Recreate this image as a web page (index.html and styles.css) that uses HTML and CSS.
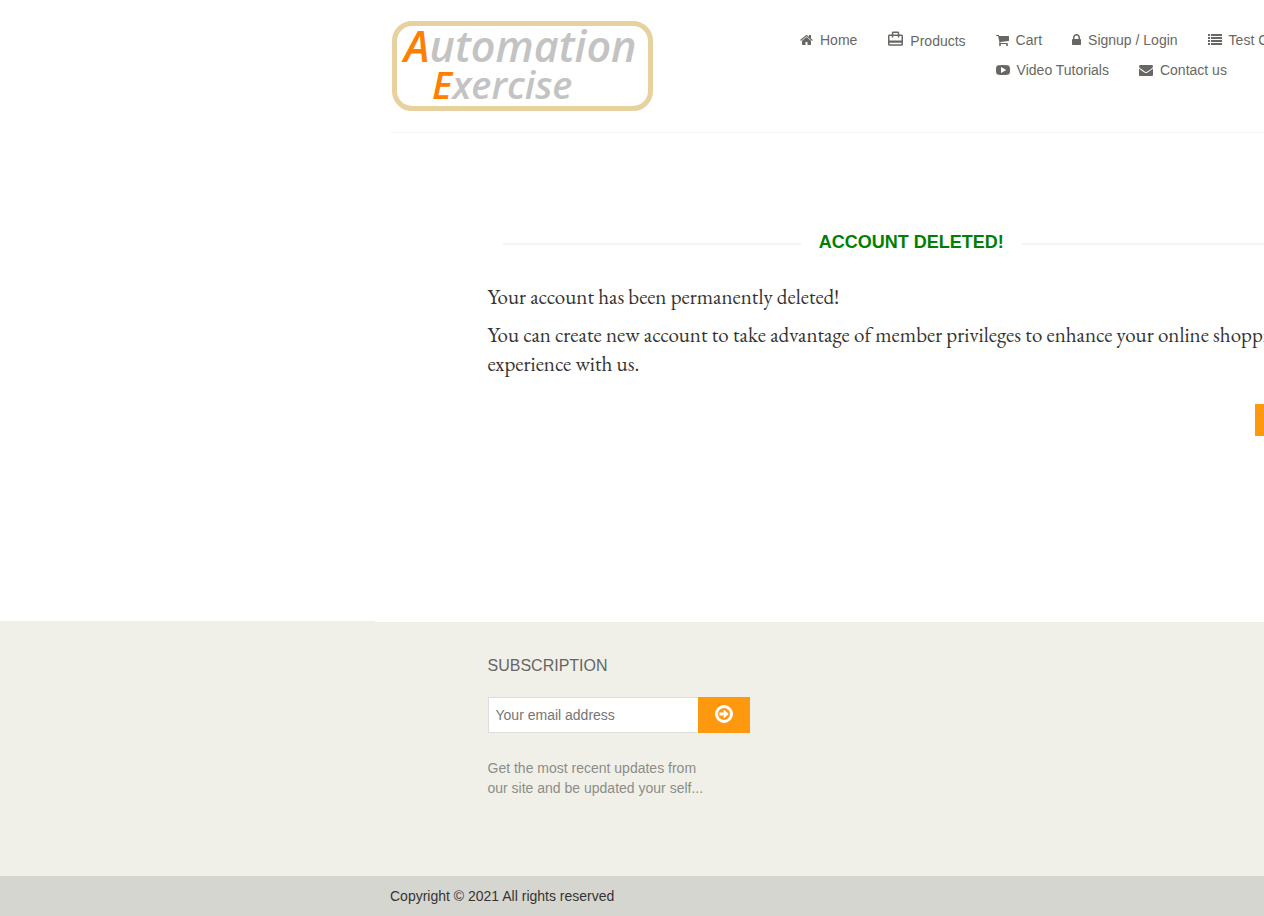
FILE: index.html
```html
<!DOCTYPE html>
<html lang="en">
<head>
<meta charset="utf-8">
<title>Automation Exercise - Account Deleted</title>
<link rel="stylesheet" href="styles.css">
</head>
<body>
<div class="page">
  <header class="container">
    <div class="header-bar">
      <a class="logo" href="#" aria-label="Automation Exercise home">
        <span class="logo-line"><span class="logo-cap">A</span>utomation</span>
        <span class="logo-line logo-second"><span class="logo-cap">E</span>xercise</span>
      </a>
      <nav class="nav">
        <ul class="nav-list">
          <li><a href="#"><svg class="icon" viewBox="64 0 1664 1792" width="13" height="14"><path d="M1472 992v480q0 26-19 45t-45 19h-384v-384h-256v384h-384q-26 0-45-19t-19-45v-480q0-1 .5-3t.5-3l575-474 575 474q1 2 1 6zm223-69l-62 74q-8 9-21 11h-3q-13 0-21-7l-692-577-692 577q-12 8-24 7-13-2-21-11l-62-74q-8-10-7-23.5t11-21.5l719-599q32-26 76-26t76 26l244 204v-195q0-14 9-23t23-9h192q14 0 23 9t9 23v408l219 182q10 8 11 21.5t-7 23.5z"/></svg>Home</a></li>
          <li><a class="products" href="#"><svg class="icon bag" viewBox="2 0 20 24" width="15" height="18"><path d="M20 6h-3V4c0-1.11-.89-2-2-2H9c-1.11 0-2 .89-2 2v2H4c-1.11 0-2 .89-2 2v11c0 1.11.89 2 2 2h16c1.11 0 2-.89 2-2V8c0-1.11-.89-2-2-2zM9 4h6v2H9V4zm11 15H4v-2h16v2zm0-5H4V8h3v2h2V8h6v2h2V8h3v6z"/></svg>Products</a></li>
        </ul>
        <div class="nav-rows">
          <ul class="nav-list">
            <li><a href="#"><svg class="icon" viewBox="64 0 1664 1792" width="13" height="14"><path d="M704 1536q0 52-38 90t-90 38-90-38-38-90 38-90 90-38 90 38 38 90zm896 0q0 52-38 90t-90 38-90-38-38-90 38-90 90-38 90 38 38 90zm128-1088v512q0 24-16.500 42.500t-40.500 21.500l-1044 122q13 60 13 70 0 16-24 64h920q26 0 45 19t19 45-19 45-45 19h-1024q-26 0-45-19t-19-45q0-11 8-31.500t16-36 21.500-40 15.500-29.500l-177-823h-204q-26 0-45-19t-19-45 19-45 45-19h256q16 0 28.500 6.500t19.500 15.500 13 24.500 8 26 5.500 29.500 4.500 26h1201q26 0 45 19t19 45z"/></svg>Cart</a></li>
            <li><a href="#"><svg class="icon" viewBox="320 0 1152 1792" width="9" height="14"><path d="M640 768h512v-192q0-106-75-181t-181-75-181 75-75 181v192zm832 96v576q0 40-28 68t-68 28h-960q-40 0-68-28t-28-68v-576q0-40 28-68t68-28h32v-192q0-184 132-316t316-132 316 132 132 316v192h32q40 0 68 28t28 68z"/></svg>Signup / Login</a></li>
            <li><a href="#"><svg class="icon" viewBox="0 0 14 14" width="14" height="14"><path d="M0 1h2v2H0zM3 1h11v2H3zM0 4h2v2H0zM3 4h11v2H3zM0 7h2v2H0zM3 7h11v2H3zM0 10h2v2H0zM3 10h11v2H3z"/></svg>Test Cases</a></li>
          </ul>
          <ul class="nav-list">
            <li><a href="#"><svg class="icon" viewBox="0 0 14 14" width="14" height="14"><path fill-rule="evenodd" d="M2.500 2.200Q7 1.800 11.500 2.200Q13.500 2.300 13.800 4.200Q14.200 7 13.800 9.800Q13.500 11.700 11.500 11.800Q7 12.200 2.500 11.800Q.5 11.700.2 9.800Q-.2 7 .2 4.200Q.5 2.300 2.500 2.200zM5 4.400v5.200q.1.500.6.200l4.200-2.500q.4-.3 0-.6L5.600 4.200Q5.100 3.900 5 4.400z"/></svg>Video Tutorials</a></li>
            <li><a href="#"><svg class="icon" viewBox="0 0 1792 1792" width="14" height="14"><path d="M1792 710v794q0 66-47 113t-113 47h-1472q-66 0-113-47t-47-113v-794q44 49 101 87 362 246 497 345 57 42 92.500 65.500t94.500 48 110 24.500h2q51 0 110-24.500t94.500-48 92.500-65.500q170-123 498-345 57-39 100-87zm0-294q0 79-49 151t-122 123q-376 261-468 325-10 7-42.500 31t-54 38.500-52 32.500-57.500 27-50 9h-2q-23 0-50-9t-57.500-27-52-32.500-54-38.500-42.500-31q-91-64-262-182.500t-205-142.500q-62-42-117-115.500t-55-136.500q0-78 41.500-130t118.500-52h1472q65 0 112.500 47t47.500 113z"/></svg>Contact us</a></li>
          </ul>
        </div>
      </nav>
    </div>
  </header>

  <main class="grid message">
    <section class="message-body">
      <h2 class="title">Account Deleted!</h2>
      <p>Your account has been permanently deleted!</p>
      <p>You can create new account to take advantage of member privileges to enhance your online shopping experience with us.</p>
      <div class="actions"><a class="continue" href="#">Continue</a></div>
    </section>
  </main>

  <footer>
    <div class="footer-top">
      <div class="grid footer-grid">
        <form class="subscribe">
          <h2 class="subscribe-title"><label for="email">Subscription</label></h2>
          <div class="field">
            <input id="email" type="email" placeholder="Your email address">
            <button type="button" aria-label="Subscribe"><svg viewBox="0 0 18 18" width="18" height="18"><circle cx="9" cy="9" r="7.500" fill="none" stroke="#fff" stroke-width="3"/><path fill="#fff" d="M4.500 7.500H8.700V5.200q0-.5.500-.2l4 3.600q.4.400 0 .8l-4 3.600q-.5.300-.5-.2V10.500H4.500z"/></svg></button>
          </div>
          <p class="note">Get the most recent updates from<br>our site and be updated your self...</p>
        </form>
      </div>
    </div>
    <div class="footer-bottom"><p class="container copyright">Copyright © 2021 All rights reserved</p></div>
  </footer>
</div>
</body>
</html>
```
FILE: styles.css
```css
* { box-sizing: border-box; }
html { overflow: hidden; }
body {
  margin: 0;
  overflow: hidden;
  background: #fff;
  color: #363432;
  font: 14px/20px "Liberation Sans", Arial, sans-serif;
}
p, h2, ul { margin: 0; padding: 0; }
a { color: inherit; text-decoration: none; }

/* Desktop layout: a centred 1170px column on a wide canvas */
.page {
  display: flex;
  flex-direction: column;
  min-width: 1920px;
  min-height: 100vh;
}
.container {
  width: 100%;
  max-width: 1170px;
  margin: 0 auto;
  padding: 0 15px;
}
.grid {
  display: grid;
  grid-template-columns: repeat(12, 1fr);
  width: 100%;
  max-width: 1170px;
  margin: 0 auto;
}

.header-bar {
  display: flex;
  align-items: flex-start;
  padding: 21px 0;
  border-bottom: 1px solid #f5f5f5;
}
.logo {
  width: 261px;
  margin-left: 2px;
  padding: 1px 5px 3px 7px;
  border: 5px solid #e6d19f;
  border-radius: 20px;
  color: #c3c3c3;
  font: italic 600 43px/38px "Open Sans", sans-serif;
  white-space: nowrap;
}
.logo-line { display: block; }
.logo-second {
  padding-left: 28px;
  font-size: 38px;
}
.logo-cap { color: #ff8000; }

.nav {
  display: flex;
  gap: 30px;
  margin-left: 147px;
  padding-top: 9px;
  color: #696763;
  white-space: nowrap;
}
.nav-list {
  display: flex;
  align-items: flex-start;
  gap: 30px;
  list-style: none;
}
.nav-rows {
  display: flex;
  flex-direction: column;
  gap: 10px;
}
.nav a {
  display: flex;
  align-items: center;
  gap: 7px;
}
.nav .products {
  height: 22px;
  padding-left: 1px;
}
.icon { fill: currentColor; }
.bag { margin-bottom: 5px; }

.message { padding-top: 98px; }
.message-body {
  grid-column: 2 / span 9;
  padding: 0 15px;
  font: 21px/29px "EB Garamond", Garamond, "Liberation Serif", serif;
}
.message-body p { margin-bottom: 9px; }
.title {
  display: flex;
  align-items: center;
  gap: 18px;
  margin-bottom: 29px;
  padding: 0 15px;
  color: #008000;
  font: 700 18px/22px "Liberation Sans", Arial, sans-serif;
  text-transform: uppercase;
}
.title::before, .title::after {
  content: "";
  flex: 1;
  margin-top: 4px;
  border-top: 2px solid #f4f4f4;
}
.actions {
  display: flex;
  justify-content: flex-end;
  padding-top: 17px;
}
.continue {
  padding: 6px 12px;
  background: #fe980f;
  color: #fff;
  font: 14px/20px "Liberation Sans", Arial, sans-serif;
}

footer { margin-top: auto; }
.footer-top { background: #f0f0e9; }
.footer-grid {
  padding: 33px 0 78px;
  border-top: 1px solid #fff;
}
.subscribe {
  grid-column: 2 / span 3;
  padding: 0 15px;
}
.subscribe-title {
  margin-bottom: 20px;
  color: #666663;
  font-size: 16px;
  font-weight: 400;
  line-height: 22px;
  text-transform: uppercase;
}
.field { display: flex; }
.field input {
  width: 211px;
  height: 36px;
  padding: 0 7px;
  border: 1px solid #ddd;
  border-right: 0;
  border-radius: 0;
  background: #fff;
  font: inherit;
}
.field input::placeholder { color: #757575; }
.field button {
  display: grid;
  place-items: center;
  width: 52px;
  height: 36px;
  padding: 0 0 2px;
  border: 0;
  background: #fe980f;
}
.note {
  margin-top: 25px;
  color: #8c8c88;
}
.footer-bottom {
  padding: 10px 0;
  background: #d6d6d0;
}
```
